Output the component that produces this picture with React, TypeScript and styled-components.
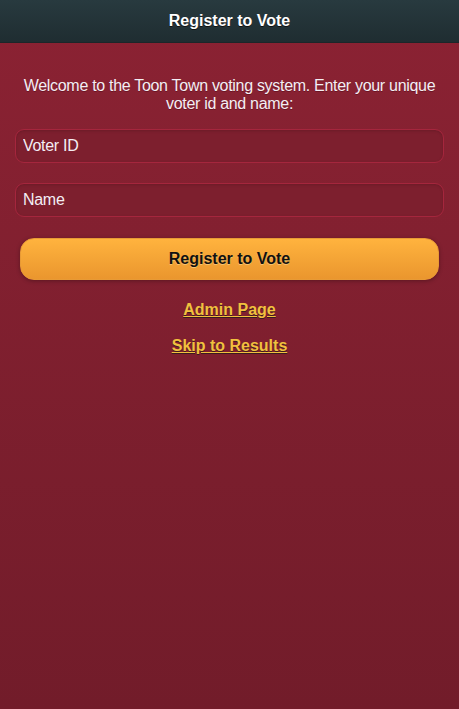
import styled, { createGlobalStyle } from 'styled-components';

const GlobalStyle = createGlobalStyle`
    html, body {
        margin: 0;
        padding: 0;
        height: 100%;
    }
    body {
        font-family: 'Liberation Sans', Arial, sans-serif;
        background: #741c2a;
    }
    #root {
        min-height: 100%;
    }
`;

export default function App() {
    return (
        <>
            <GlobalStyle />
            <Page>
                <Header>
                    <Title>Register to Vote</Title>
                </Header>
                <Content>
                    <Intro>
                        Welcome to the Toon Town voting system. Enter your
                        unique voter id and name:
                    </Intro>
                    <Field type="text" placeholder="Voter ID" />
                    <Field type="text" placeholder="Name" />
                    <SubmitButton type="button">Register to Vote</SubmitButton>
                    <Links>
                        <NavLink href="#admin">Admin Page</NavLink>
                        <NavLink href="#results">Skip to Results</NavLink>
                    </Links>
                </Content>
            </Page>
        </>
    );
}

const Page = styled.div`
    min-height: 709px;
    display: flex;
    flex-direction: column;
    background: linear-gradient(#8b2233, #721c2a);
`;

const Header = styled.header`
    height: 43px;
    display: flex;
    align-items: center;
    justify-content: center;
    background: linear-gradient(#283a3f, #1f2d31);
    border-bottom: 1px solid #1c2629;
    box-sizing: border-box;
`;

const Title = styled.h1`
    margin: 0;
    font-size: 16px;
    font-weight: bold;
    color: #fff;
    text-shadow: 0 1px 0 #111;
`;

const Content = styled.main`
    padding: 15px;
    display: flex;
    flex-direction: column;
`;

const Intro = styled.p`
    margin: 19px 0 16px;
    font-size: 16px;
    line-height: 18px;
    letter-spacing: -0.3px;
    text-align: center;
    color: #f4eef4;
    text-shadow: 0 1px 0 rgba(60, 0, 10, 0.4);
`;

const Field = styled.input`
    box-sizing: border-box;
    width: 100%;
    height: 34px;
    margin: 0 0 20px;
    padding: 0 7px;
    border: 1px solid #a5263d;
    border-radius: 9px;
    background: #7d1f2e;
    box-shadow: inset 0 1px 3px rgba(0, 0, 0, 0.15);
    font-family: 'Liberation Sans', Arial, sans-serif;
    font-size: 16px;
    letter-spacing: -0.3px;
    color: #f4eef4;
    outline: none;

    &::placeholder {
        color: #f4eef4;
        opacity: 1;
    }
`;

const SubmitButton = styled.button`
    box-sizing: border-box;
    height: 42px;
    margin: 1px 5px 20px;
    border: 1px solid #e89a35;
    border-radius: 14px;
    background: linear-gradient(#ffb33e, #ea962e);
    box-shadow: 0 1px 4px rgba(0, 0, 0, 0.3);
    font-family: 'Liberation Sans', Arial, sans-serif;
    font-size: 16px;
    font-weight: bold;
    color: #111;
    text-shadow: 0 1px 0 #f7c36e;
    cursor: pointer;
`;

const Links = styled.nav`
    display: flex;
    flex-direction: column;
    align-items: center;
    gap: 17px;
`;

const NavLink = styled.a`
    font-size: 16px;
    font-weight: bold;
    line-height: 19px;
    color: #f2c03e;
    text-decoration: underline;
    text-shadow: 0 1px 0 #3a1a20;
`;
